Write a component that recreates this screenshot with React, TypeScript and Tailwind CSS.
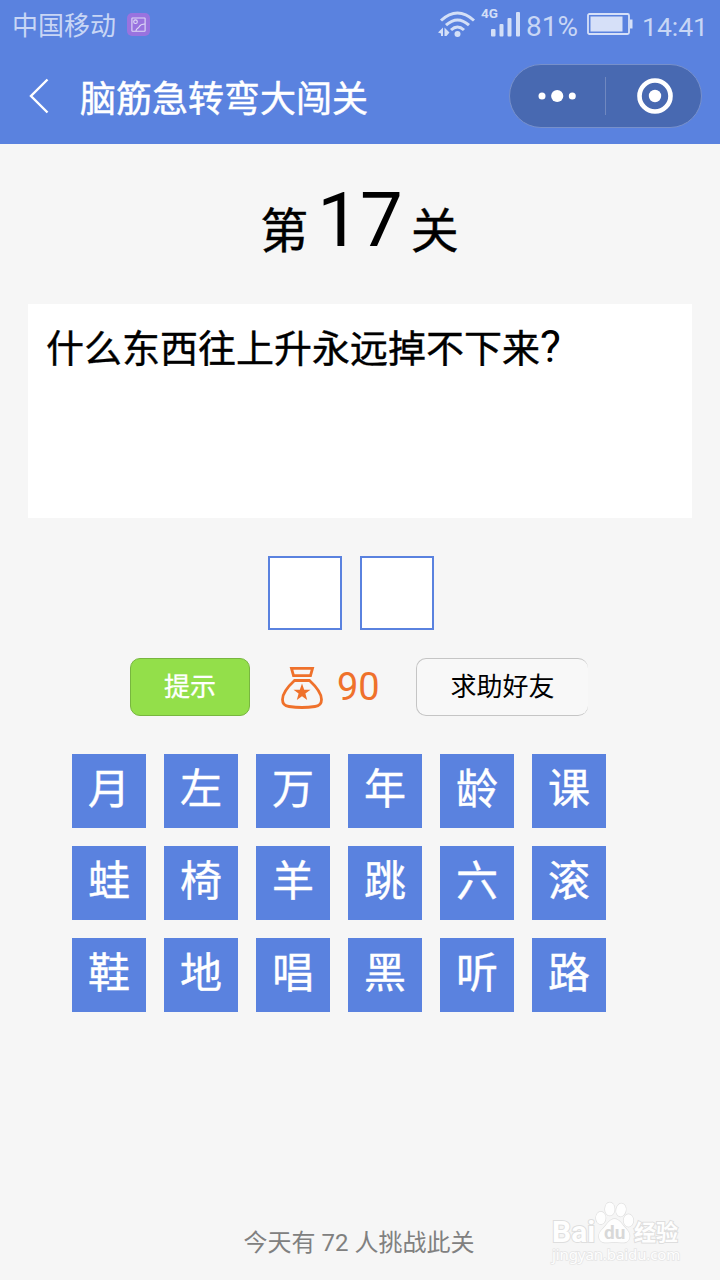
import React from 'react';

const tiles = [
  '月', '左', '万', '年', '龄', '课',
  '蛙', '椅', '羊', '跳', '六', '滚',
  '鞋', '地', '唱', '黑', '听', '路',
];

const StatusBar: React.FC = () => (
  <div className="flex h-12 items-center justify-between pl-3 pr-[12px] text-[#c8d6f5]">
    <div className="flex items-center gap-[11px]">
      <span className="pt-[5px] text-[26px] leading-[43px]">中国移动</span>
      <svg width="23" height="23" viewBox="0 0 23 23" fill="none">
        <rect width="23" height="23" rx="5" fill="#9973df" />
        <g stroke="#dfdcf6" strokeWidth="1.1">
          <rect x="4.9" y="5" width="13.2" height="13.2" rx="0.5" />
          <circle cx="8.5" cy="8.7" r="1.8" />
          <path d="M9 18C9 15.5 10.6 15.6 11.8 14.3C12.8 13.2 12.7 11 18 11" />
        </g>
      </svg>
    </div>
    <div className="flex items-center">
      <svg className="mr-[3px]" width="86" height="38" viewBox="0 -2 86 38">
        <g fill="none" stroke="#d3dff7" strokeWidth="3" strokeLinecap="butt">
          <path d="M4 13.5Q20.5 -1.5 37 13.5" />
          <path d="M9 18.2Q20.5 7.8 32 18.2" />
          <path d="M14 23Q20.5 17 27 23" />
        </g>
        <g fill="#d3dff7">
          <circle cx="20.5" cy="27" r="3" />
          <path d="M1 25.5L6 20.5V29H4V26.5Z M7.5 20.5L12.5 25.5L9.5 29H7.5Z" />
          <rect x="54" y="22" width="4.5" height="7.5" rx="1" />
          <rect x="62.5" y="17" width="4" height="12.5" rx="1" />
          <rect x="70.5" y="11" width="4" height="18.5" rx="1" />
          <rect x="79" y="5" width="4" height="24.5" rx="1" />
          <text x="44" y="10.5" fontFamily="Roboto, sans-serif" fontWeight="700" fontSize="13.5">4G</text>
        </g>
      </svg>
      <span className="pt-[5px] text-[28px] leading-[43px]">81%</span>
      <svg className="ml-[9px] mr-[9px]" width="46" height="23" viewBox="0 0 46 23">
        <rect x="1" y="1" width="41" height="20" rx="1.5" fill="none" stroke="#d6e0f8" strokeWidth="1.8" />
        <rect x="3.5" y="3.5" width="32" height="15" fill="#d6e0f8" />
        <rect x="43" y="6.5" width="2.5" height="9" fill="#d6e0f8" />
      </svg>
      <span className="pt-[5px] text-[26.5px] leading-[43px]">14:41</span>
    </div>
  </div>
);

const NavBar: React.FC = () => (
  <div className="flex h-24 items-center pl-7 pr-[18px]">
    <svg width="22" height="36" viewBox="0 0 22 36" fill="none" stroke="#fff" strokeWidth="2.4">
      <path d="M19.5 1.5L3 18L19.5 34.5" />
    </svg>
    <h1 className="ml-[30px] flex-1 pt-[8px] text-4xl leading-[88px] text-white [-webkit-text-stroke:0.5px]">脑筋急转弯大闯关</h1>
    <div className="flex h-16 w-[193px] items-center rounded-full border border-[#7790cb] bg-[#4869b1]">
      <svg width="95" height="40" viewBox="0 0 95 40" fill="#fff">
        <circle cx="32" cy="20" r="3.5" />
        <circle cx="47.2" cy="20" r="6.1" />
        <circle cx="62.3" cy="20" r="3.5" />
      </svg>
      <div className="h-[38px] w-px bg-[#7088c0]" />
      <svg width="95" height="40" viewBox="0 0 95 40" fill="none">
        <circle cx="49" cy="20" r="15.5" stroke="#fff" strokeWidth="4.6" />
        <circle cx="49" cy="20" r="6.2" fill="#fff" />
      </svg>
    </div>
  </div>
);

const CoinBag: React.FC = () => (
  <svg width="44" height="44" viewBox="0 0 44 44" fill="none" stroke="#ef712b" strokeWidth="2.8">
    <path d="M11.5 3.4H32.5L30.5 10.6H13.5Z" />
    <path d="M14.5 15.5H29.5C36 21.5 41.5 28 41.5 34.5C41.5 38.5 39 41 35 41.5C27 42.7 17 42.7 9 41.5C5 41 2.5 38.5 2.5 34.5C2.5 28 8 21.5 14.5 15.5Z" />
    <path d="M22 18.5L24.2 24.7H30.5L25.4 28.6L27.2 35L22 31.2L16.8 35L18.6 28.6L13.5 24.7H19.8Z" fill="#ef712b" stroke="none" />
  </svg>
);

const Watermark: React.FC = () => (
  <div className="absolute top-[1200px] left-[552px] h-[66px] w-[130px] whitespace-nowrap text-[#fefefe] [paint-order:stroke_fill] [-webkit-text-stroke:2px_#dedede]">
    <svg className="absolute top-0 left-[42px]" width="42" height="46" viewBox="0 0 42 46" fill="#fefefe" stroke="#e0e0e0" strokeWidth="1.4">
      <ellipse cx="6.8" cy="18" rx="4.8" ry="6.2" />
      <ellipse cx="15.8" cy="9" rx="4.8" ry="6.6" />
      <ellipse cx="27" cy="10" rx="4.8" ry="6.5" transform="rotate(12 27 10)" />
      <ellipse cx="34.5" cy="20.5" rx="4.8" ry="6.2" />
      <path d="M20.5 19C25 19 27 23 30 26.5C33 30 36 32 35.5 37C35 42 31 43 27 42.5C22 41.8 19 41.8 14 42.5C10 43 5.5 42 5 37C4.5 32 8 30 11 26.5C14 23 16 19 20.5 19Z" />
    </svg>
    <span className="absolute top-[21px] left-0 text-[30px] leading-[22px] font-bold">Bai</span>
    <span className="absolute top-[23px] left-[52px] text-[19px] leading-5 font-bold text-[#d8d8d8] [-webkit-text-stroke:0]">du</span>
    <span className="absolute top-[23px] left-[82px] text-[22px] leading-5 font-bold">经验</span>
    <span className="absolute top-[47px] left-0 font-[family-name:'Noto_Sans'] text-[15px] leading-[14px] tracking-[-0.1px] [-webkit-text-stroke:1.5px_#e5e5e5]">
      jingyan.baidu.com
    </span>
  </div>
);

export default function App() {
  return (
    <div className="relative flex h-[1280px] w-[720px] flex-col overflow-hidden bg-[#f6f6f6] font-[Roboto,'Noto_Sans_CJK_SC',sans-serif] text-black">
      <header className="h-36 bg-[#5a82df]">
        <StatusBar />
        <NavBar />
      </header>

      <div className="flex h-40 items-baseline justify-center gap-2 pt-[31px] text-5xl leading-[90px]">
        <span className="relative top-[2px] pr-px [-webkit-text-stroke:0.4px]">第</span>
        <span className="text-[76px]">17</span>
        <span className="relative top-[2px] pr-px [-webkit-text-stroke:0.4px]">关</span>
      </div>

      <div className="mx-7 h-[214px] bg-white px-[18px] pt-[17px] text-[38px] leading-[56px] [-webkit-text-stroke:0.4px]">
        什么东西往上升永远掉不下来<span className="text-[44px] leading-none [-webkit-text-stroke:0]">?</span>
      </div>

      <div className="mt-[38px] ml-[268px] flex gap-[18px]">
        <div className="size-[74px] border-2 border-[#5a82df] bg-white" />
        <div className="size-[74px] border-2 border-[#5a82df] bg-white" />
      </div>

      <div className="mt-7 ml-[130px] flex h-[58px] items-center">
        <button className="h-[58px] w-[120px] rounded-[10px] border border-[#78b63f] bg-[#93df4a] text-[26px] leading-[56px] text-white [-webkit-text-stroke:0.3px]">
          提示
        </button>
        <div className="ml-[30px] flex w-[136px] items-center gap-[13px]">
          <CoinBag />
          <span className="text-[38px] leading-[58px] text-[#ef712b]">90</span>
        </div>
        <button className="h-[58px] w-[172px] rounded-[10px] border border-r-0 border-[#c5c5c5] bg-[#f8f8f8] text-[26px] leading-[56px]">
          求助好友
        </button>
      </div>

      <div className="mt-[38px] ml-[72px] grid w-[534px] grid-cols-6 gap-[18px]">
        {tiles.map((char, i) => (
          <div key={i} className="h-[74px] bg-[#5a82df] pt-[3px] text-center text-[42px] leading-[66px] text-white [-webkit-text-stroke:0.4px]">
            {char}
          </div>
        ))}
      </div>

      <p className="mt-auto pr-[2px] pb-[21px] text-center text-2xl leading-8 text-[#808080]">今天有 72 人挑战此关</p>

      <Watermark />
    </div>
  );
}
